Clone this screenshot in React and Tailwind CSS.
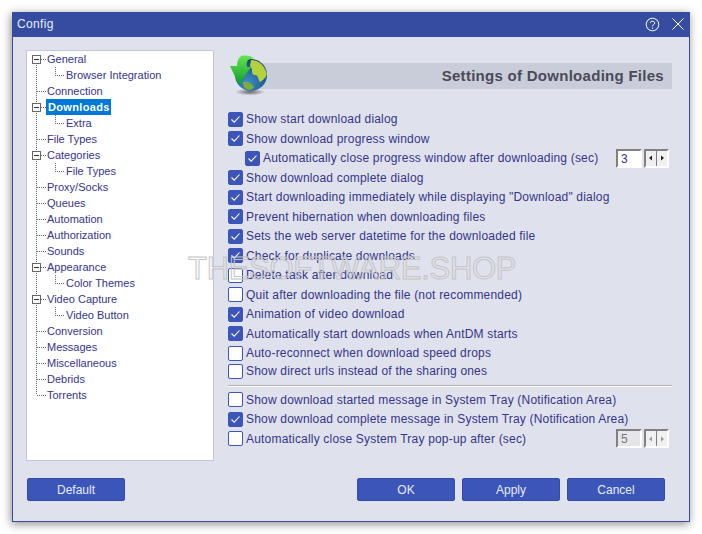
const TREE = [
  { t: "General", l: 0, e: 1 },
  { t: "Browser Integration", l: 1 },
  { t: "Connection", l: 0 },
  { t: "Downloads", l: 0, e: 1, s: 1 },
  { t: "Extra", l: 1 },
  { t: "File Types", l: 0 },
  { t: "Categories", l: 0, e: 1 },
  { t: "File Types", l: 1 },
  { t: "Proxy/Socks", l: 0 },
  { t: "Queues", l: 0 },
  { t: "Automation", l: 0 },
  { t: "Authorization", l: 0 },
  { t: "Sounds", l: 0 },
  { t: "Appearance", l: 0, e: 1 },
  { t: "Color Themes", l: 1 },
  { t: "Video Capture", l: 0, e: 1 },
  { t: "Video Button", l: 1 },
  { t: "Conversion", l: 0 },
  { t: "Messages", l: 0 },
  { t: "Miscellaneous", l: 0 },
  { t: "Debrids", l: 0 },
  { t: "Torrents", l: 0, last: 1 },
];

const OPTS1 = [
  ["Show start download dialog", 1],
  ["Show download progress window", 1],
  ["Automatically close progress window after downloading (sec)", 1, "sub"],
  ["Show download complete dialog", 1],
  ["Start downloading immediately while displaying \"Download\" dialog", 1],
  ["Prevent hibernation when downloading files", 1],
  ["Sets the web server datetime for the downloaded file", 1],
  ["Check for duplicate downloads", 1],
  ["Delete task after download", 0],
  ["Quit after downloading the file (not recommended)", 0],
  ["Animation of video download", 1],
  ["Automatically start downloads when AntDM starts", 1],
  ["Auto-reconnect when download speed drops", 0],
  ["Show direct urls instead of the sharing ones", 0, "tight"],
];

const OPTS2 = [
  ["Show download started message in System Tray (Notification Area)", 0],
  ["Show download complete message in System Tray (Notification Area)", 1],
  ["Automatically close System Tray pop-up after (sec)", 0, "dis"],
];

function Connector({ row }) {
  const w = row.l ? 39 : 20;
  const dot = { stroke: "#666", strokeWidth: 1, strokeDasharray: "1 1", shapeRendering: "crispEdges" };
  return (
    <svg width={w} height="16" className="shrink-0">
      <line x1="9.5" y1={row.first ? 8 : 0} x2="9.5" y2={row.last ? 8 : 16} style={dot} />
      {row.l ? (
        <>
          <line x1="28.5" y1="0" x2="28.5" y2="8" style={dot} />
          <line x1="28" y1="8.5" x2="38" y2="8.5" style={dot} />
        </>
      ) : (
        <line x1="10" y1="8.5" x2="19" y2="8.5" style={dot} />
      )}
      {row.e ? (
        <>
          <rect x="5.5" y="4.5" width="8" height="8" fill="#fff" stroke="#666" shapeRendering="crispEdges" />
          <line x1="7" y1="8.5" x2="12" y2="8.5" stroke="#333" shapeRendering="crispEdges" />
        </>
      ) : null}
    </svg>
  );
}

function Tree() {
  return (
    <div className="w-[188px] h-[411px] shrink-0 bg-white border border-[#c3c8d4] flex flex-col text-[11px]">
      {TREE.map((r, i) => (
        <div key={i} className="h-4 flex items-center">
          <Connector row={i === 0 ? { ...r, first: 1 } : r} />
          {r.s ? (
            <span className="h-4 leading-[16px] pl-[2px] pr-[1px] -ml-[1px] bg-[#0078d7] text-white font-bold tracking-[0.35px]">{r.t}</span>
          ) : (
            <span className="leading-4">{r.t}</span>
          )}
        </div>
      ))}
    </div>
  );
}

function Box({ on }) {
  return on ? (
    <span className="w-[15px] h-[15px] shrink-0 rounded-[2px] bg-[#3c55b8] border border-[#3c55b8] flex items-center justify-center">
      <svg width="11" height="11" viewBox="0 0 11 11" fill="none">
        <path d="M1.5 5.5 L4.2 8.2 L9.5 2.5" stroke="#fff" strokeWidth="1.1" />
      </svg>
    </span>
  ) : (
    <span className="w-[15px] h-[15px] shrink-0 rounded-[2px] bg-white border border-[#3c55b8]" />
  );
}

function Spin({ value, disabled }) {
  const c = disabled ? "#999" : "#222";
  return (
    <div className="flex items-center gap-[2px] ml-auto mr-[3px]">
      <div className={`w-[26px] h-[19px] border-2 border-t-[#808080] border-l-[#808080] border-r-white border-b-white pl-[3px] leading-[16px] ${disabled ? "bg-[#e6e6ea] text-[#777]" : "bg-white text-[#33338a]"}`}>
        {value}
      </div>
      <div className="h-[19px] w-[25px] flex border-2 border-t-[#808080] border-l-[#808080] border-r-white border-b-white bg-[#808080] gap-[1px]">
        <span className="flex-1 bg-[#f0f0f0] flex items-center justify-center">
          <svg width="4" height="6"><path d="M3 0.5V5.5L0 3Z" fill={c} /></svg>
        </span>
        <span className="flex-1 bg-[#f0f0f0] flex items-center justify-center">
          <svg width="4" height="6"><path d="M1 0.5V5.5L4 3Z" fill={c} /></svg>
        </span>
      </div>
    </div>
  );
}

function Opt({ o }) {
  const sub = o[2] === "sub";
  const dis = o[2] === "dis";
  const tight = o[2] === "tight";
  return (
    <div className={`h-[19.5px] flex items-center ${sub ? "pl-[17px]" : ""} ${tight ? "-mt-[1.2px]" : ""}`}>
      <Box on={o[1]} />
      <span className="ml-[3px] whitespace-nowrap tracking-[0.19px]">{o[0]}</span>
      {sub ? <Spin value="3" /> : null}
      {dis ? <Spin value="5" disabled /> : null}
    </div>
  );
}

function Globe() {
  return (
    <svg width="40" height="44" viewBox="0 0 40 44" className="shrink-0 relative">
      <defs>
        <radialGradient id="sea" cx="0.4" cy="0.75" r="0.8">
          <stop offset="0" stopColor="#3f8fc8" />
          <stop offset="0.7" stopColor="#1c5a90" />
          <stop offset="1" stopColor="#103a60" />
        </radialGradient>
        <linearGradient id="arrow" x1="0" y1="0" x2="0" y2="1">
          <stop offset="0" stopColor="#63e650" />
          <stop offset="1" stopColor="#0f9a2a" />
        </linearGradient>
        <radialGradient id="sh" cx="0.5" cy="0.5" r="0.5">
          <stop offset="0" stopColor="#333" stopOpacity="0.7" />
          <stop offset="1" stopColor="#333" stopOpacity="0" />
        </radialGradient>
      </defs>
      <ellipse cx="22" cy="38" rx="15" ry="3.5" fill="url(#sh)" />
      <circle cx="23" cy="21" r="16" fill="url(#sea)" />
      <path d="M23 6 C31 6 37 12 38.8 20 C38 24 35 26 32 28 C30 26 31 23 28 21 C24 22 24 18 24 15 L22 12Z" fill="#b4d23c" />
      <path d="M15 28 C20 27 25 30 26 34 C22 37 18 36 16 33Z" fill="#7fae38" />
      <path d="M13 2 C18 1 23 2 26 4 L22 5 C19 6 18 9 19 13 L23 13 L11 31 L2 12 L9 12 C9 8 10 4 13 2Z" fill="url(#arrow)" />
    </svg>
  );
}

function Btn({ children }) {
  return (
    <button className="w-[98px] h-[23px] rounded-[2px] bg-[#3c55b8] border border-[#344aa6] text-[#e6ebff] text-[12px] leading-[20px]">
      {children}
    </button>
  );
}

export default function App() {
  return (
    <div className="relative w-[702px] h-[534px] bg-white pt-[12px] pl-[12px] overflow-hidden font-['Liberation_Sans',Arial,sans-serif] text-[12px] text-[#35358a]">
      <div className="w-[678px] h-[510px] bg-[#dfe2ec] border border-[#354ca0] flex flex-col shadow-[-1px_2px_9px_rgba(0,0,0,0.45)]">
        <div className="h-[24px] -mx-[1px] -mt-[1px] shrink-0 bg-[#354ca0] text-[#e8ecf8] flex items-center pl-[5px] pr-[6px] box-content pb-[1px]">
          <span className="text-[12px] tracking-[0.35px]">Config</span>
          <span className="ml-auto flex items-center gap-[12px]">
            <svg width="15" height="15" viewBox="0 0 15 15" fill="none" stroke="#fff">
              <circle cx="7.5" cy="7.5" r="6.3" />
              <path d="M5.3 6 C5.3 3.6 9.7 3.6 9.7 6 C9.7 7.6 7.5 7.5 7.5 9.4" />
              <path d="M7.5 10.6v1.2" />
            </svg>
            <svg width="12" height="12" viewBox="0 0 12 12" fill="none" stroke="#fff">
              <path d="M0.5 0.5 L11.5 11.5 M11.5 0.5 L0.5 11.5" />
            </svg>
          </span>
        </div>
        <div className="flex pl-[13px] pt-[13px]">
          <Tree />
          <div className="w-[444px] ml-[14px]">
            <div className="flex items-center h-[44px] mt-[4px]">
              <Globe />
              <div className="-ml-[18px] flex-1 h-[26px] bg-[#c9cdd9] flex items-center justify-end pr-[8px] text-[15px] font-bold text-[#4a4a58] tracking-[0.28px]">
                Settings of Downloading Files
              </div>
            </div>
            <div className="mt-[11.4px] flex flex-col">
              {OPTS1.map((o, i) => <Opt key={i} o={o} />)}
            </div>
            <div className="mt-[4px] mb-[3px] h-[2px] bg-[#b0b0b0] border-b border-white" />
            <div className="flex flex-col">
              {OPTS2.map((o, i) => <Opt key={i} o={o} />)}
            </div>
          </div>
        </div>
        <div className="flex mt-[auto] mb-[20px] pl-[14px] pr-[24px]">
          <Btn>Default</Btn>
          <div className="ml-auto flex gap-[7px]">
            <Btn>OK</Btn>
            <Btn>Apply</Btn>
            <Btn>Cancel</Btn>
          </div>
        </div>
      </div>
      <div className="absolute left-[188px] top-[250px] text-[31px] leading-[38px] tracking-[-0.3px] text-transparent [-webkit-text-stroke:1px_#c4c4c4] pointer-events-none whitespace-nowrap">
        THESOFTWARE.SHOP
      </div>
    </div>
  );
}
